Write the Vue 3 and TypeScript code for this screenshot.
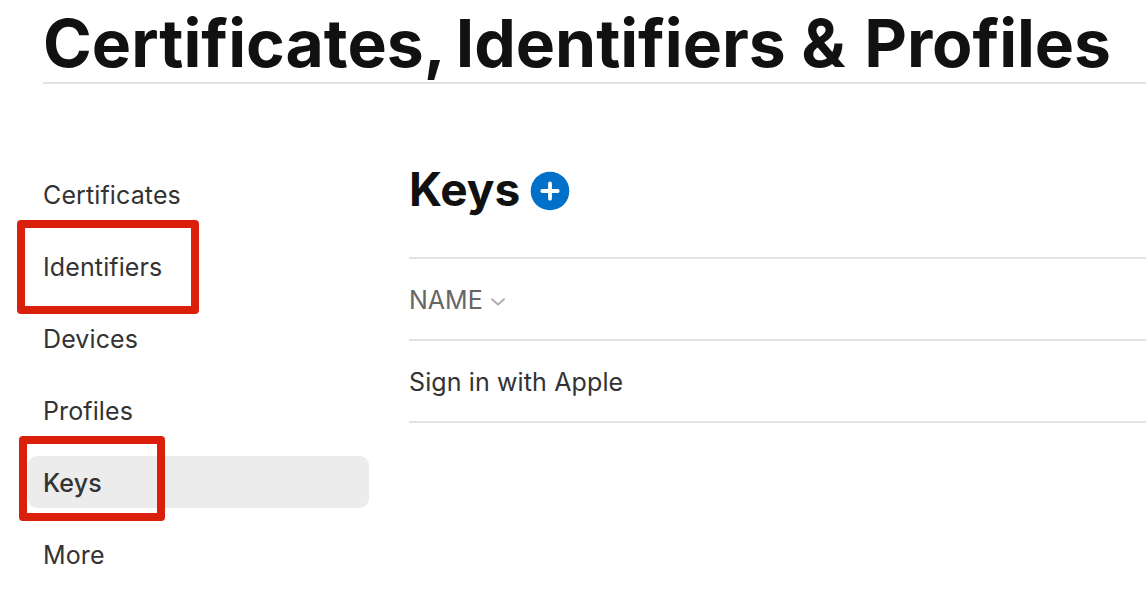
<script setup lang="ts">
interface NavItem { label: string; mark?: string; active?: boolean }
const items: NavItem[] = [
  { label: 'Certificates' },
  { label: 'Identifiers', mark: 'mark-identifiers' },
  { label: 'Devices' },
  { label: 'Profiles' },
  { label: 'Keys', mark: 'mark-keys', active: true },
  { label: 'More' },
]
</script>

<template>
  <div class="page">
    <header class="header"><h1><span class="lead">Certificates, </span><span class="mid">Identifiers </span>&amp; <span class="tail">Profiles</span></h1></header>
    <div class="body">
      <nav class="nav">
        <a v-for="item in items" :key="item.label" class="item" :class="{ active: item.active }">
          <span class="label">{{ item.label }}</span>
          <i v-if="item.mark" class="mark" :class="item.mark"></i>
        </a>
      </nav>
      <main class="main">
        <div class="title">
          <h2>Keys</h2>
          <svg class="add" width="40" height="40" viewBox="0 0 40 40">
            <circle cx="20" cy="20" r="19.3" fill="#0070c9" />
            <path d="M20 12.3V27.7M12.3 20H27.7" stroke="#fff" stroke-width="3.8" stroke-linecap="round" />
          </svg>
        </div>
        <div class="row head">
          <span class="name">NAME</span>
          <svg class="chev" width="16" height="10" viewBox="0 0 16 10">
            <path d="M2 2.2L8 7.6L14 2.2" fill="none" stroke="#b0b0b0" stroke-width="2" stroke-linecap="round" stroke-linejoin="round" />
          </svg>
        </div>
        <div class="row"><span class="key">Sign in with Apple</span></div>
      </main>
    </div>
  </div>
</template>

<style>
html, body { margin: 0; background: #fff; overflow: hidden; }
</style>
<style scoped>
.page { box-sizing: border-box; width: 1146px; height: 596px; overflow: hidden; padding-left: 43px; font-family: Inter, "Liberation Sans", sans-serif; color: #333; background: #fff; }
.header { box-sizing: border-box; height: 84px; border-bottom: 2px solid #e3e3e3; }
h1, h2 { margin: 0; color: #111; white-space: nowrap; }
h1 { font-size: 66px; line-height: 86px; font-weight: 700; }
.lead { word-spacing: -3.5px; }
.mid { letter-spacing: -0.05px; }
.tail { margin-left: 3px; letter-spacing: -0.1px; }
.body { display: flex; }
.nav { width: 326px; margin: 84px 40px 0 0; display: flex; flex-direction: column; gap: 20px; }
.item { position: relative; display: flex; align-items: center; height: 52px; font-size: 25px; letter-spacing: 0.12px; white-space: nowrap; }
.label, .name, .key { padding-top: 2px; }
.active { box-sizing: border-box; margin-left: -15px; padding-left: 15px; background: #ececec; border-radius: 9px; font-weight: 500; }
.mark { position: absolute; box-sizing: border-box; border: 8px solid #da200d; border-radius: 4px; }
.mark-identifiers { left: -26px; top: -20px; width: 182px; height: 94px; }
.mark-keys { left: -9px; top: -20px; width: 146px; height: 85px; }
.main { flex: 1; min-width: 0; }
.title { display: flex; align-items: center; height: 40px; margin: 87px 0 46px; }
h2 { font-size: 46px; font-weight: 700; line-height: 40px; padding-bottom: 4px; }
.add { margin-left: 10px; }
.row { box-sizing: border-box; height: 82px; border-top: 2px solid #e3e3e3; display: flex; align-items: center; font-size: 25px; letter-spacing: 0.12px; white-space: nowrap; }
.row:last-child { height: 84px; border-bottom: 2px solid #e3e3e3; }
.head { color: #666; letter-spacing: 0; }
.chev { margin: 5px 0 0 7px; }
</style>
